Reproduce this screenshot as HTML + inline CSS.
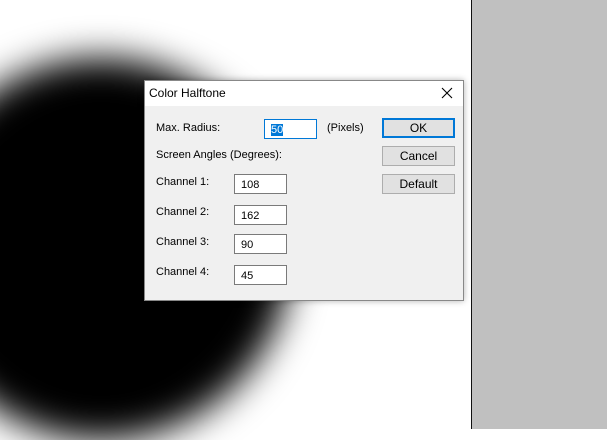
<!DOCTYPE html><html><head><style>
body{margin:0;width:607px;height:429px;overflow:hidden;background:#fff;position:relative;font-family:"Liberation Sans",sans-serif;font-size:11px;color:#000}
.blob{position:absolute;left:-90px;top:58px;width:382px;height:382px;border-radius:50%;background:#000;filter:blur(18px)}
.gray{position:absolute;left:471px;top:0;width:136px;height:429px;background:#c0c0c0;border-left:1px solid #111}
.dlg{position:absolute;left:144px;top:80px;width:318px;height:219px;background:#f0f0f0;border:1px solid #888;box-shadow:0 0 6px rgba(0,0,0,.3)}
.tb{position:absolute;left:0;top:0;width:318px;height:25px;background:#fff}
.a{position:absolute;white-space:nowrap}
.in{position:absolute;background:#fff;border:1px solid #7a7a7a;box-sizing:border-box;height:20px;width:53px;padding:4px 0 0 6px;font-size:11px}
.bt{position:absolute;left:237px;width:73px;height:20px;background:#e1e1e1;border:1px solid #adadad;box-sizing:border-box;text-align:center;line-height:18px;font-size:12px}
</style></head><body>
<div class="blob"></div>
<div class="gray"></div>
<div class="dlg">
<div class="tb"><span class="a" style="left:4px;top:5px;font-size:12px">Color Halftone</span>
<svg class="a" style="left:296px;top:6px" width="12" height="12"><path d="M1 1L11 11M11 1L1 11" stroke="#000" stroke-width="1.1"/></svg></div>
<span class="a" style="left:11px;top:41px">Max. Radius:</span>
<div class="in" style="left:119px;top:38px;border-color:#0078d7"><span style="background:#0078d7;color:#fff">50</span></div>
<span class="a" style="left:182px;top:41px">(Pixels)</span>
<div class="bt" style="top:37px;border:2px solid #0078d7;line-height:16px">OK</div>
<span class="a" style="left:11px;top:68px">Screen Angles (Degrees):</span>
<div class="bt" style="top:65px">Cancel</div>
<div class="bt" style="top:93px">Default</div>
<span class="a" style="left:11px;top:95px">Channel 1:</span><div class="in" style="left:89px;top:93px">108</div>
<span class="a" style="left:11px;top:125px">Channel 2:</span><div class="in" style="left:89px;top:124px">162</div>
<span class="a" style="left:11px;top:155px">Channel 3:</span><div class="in" style="left:89px;top:153px">90</div>
<span class="a" style="left:11px;top:185px">Channel 4:</span><div class="in" style="left:89px;top:184px">45</div>
</div>
</body></html>
